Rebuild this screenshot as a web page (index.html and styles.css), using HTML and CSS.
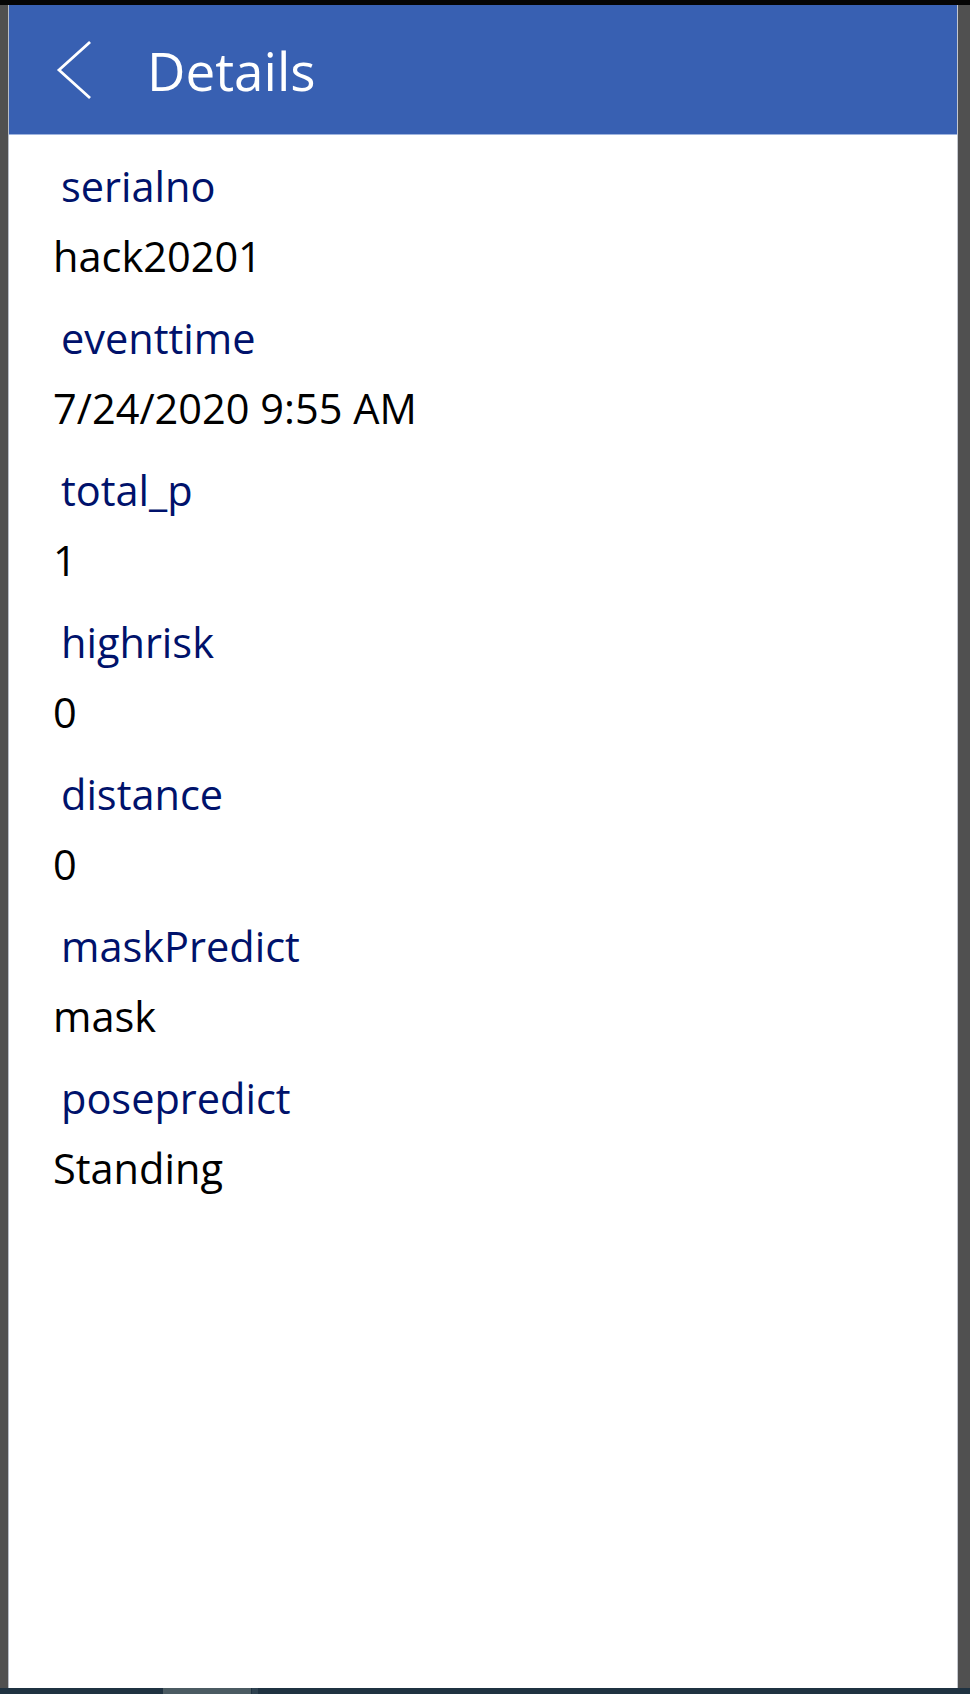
FILE: index.html
```html
<!DOCTYPE html>
<html lang="en">
<head>
<meta charset="utf-8">
<title>Details</title>
<link rel="stylesheet" href="styles.css">
</head>
<body>
<div class="topstrip"></div>
<div class="frame">
  <div class="side side-left"></div>
  <main class="app">
    <header class="header">
      <svg class="back" width="36" height="58" viewBox="0 0 36 58" aria-label="Back">
        <polyline points="33,2 3,29 33,56" fill="none" stroke="#ffffff" stroke-width="2.8" stroke-linecap="square" stroke-linejoin="miter"/>
      </svg>
      <h1 class="title">Details</h1>
    </header>
    <section class="fields">
      <div class="field"><div class="label">serialno</div><div class="value">hack20201</div></div>
      <div class="field"><div class="label">eventtime</div><div class="value">7/24/2020 9:55 AM</div></div>
      <div class="field"><div class="label">total_p</div><div class="value">1</div></div>
      <div class="field"><div class="label">highrisk</div><div class="value">0</div></div>
      <div class="field"><div class="label">distance</div><div class="value">0</div></div>
      <div class="field"><div class="label">maskPredict</div><div class="value">mask</div></div>
      <div class="field"><div class="label">posepredict</div><div class="value">Standing</div></div>
    </section>
  </main>
  <div class="side side-right"></div>
</div>
<div class="taskbar"><div class="task-item"></div><div class="task-mark"></div></div>
</body>
</html>
```
FILE: styles.css
```css
html, body {
  margin: 0;
  padding: 0;
}
body {
  width: 970px;
  height: 1694px;
  background: #505050;
  font-family: "Open Sans", "Noto Sans", sans-serif;
  overflow: hidden;
  display: flex;
  flex-direction: column;
}
.topstrip {
  height: 5px;
  background: #050505;
  flex: none;
}
.frame {
  flex: 1;
  display: flex;
  min-height: 0;
}
.side {
  background: #505050;
  flex: none;
}
.side-left {
  width: 8px;
}
.side-right {
  width: 12px;
}
.app {
  flex: 1;
  background: #ffffff;
  border-left: 1px solid #b9bec8;
  border-right: 1px solid #c4c8cf;
  display: flex;
  flex-direction: column;
}
.header {
  height: 130px;
  background: #3860b2;
  border-bottom: 1px solid #9fb4de;
  box-sizing: border-box;
  display: flex;
  align-items: center;
  flex: none;
}
.back {
  margin-left: 47px;
  flex: none;
}
.title {
  margin: 2px 0 0 55px;
  color: #ffffff;
  font-weight: 400;
  font-size: 53px;
  line-height: 60px;
}
.fields {
  padding: 21px 0 0 0;
}
.field {
  height: 152px;
  box-sizing: border-box;
}
.label {
  color: #00126b;
  font-size: 41.5px;
  line-height: 60px;
  padding-left: 52px;
}
.value {
  color: #000000;
  font-size: 41.5px;
  line-height: 60px;
  margin-top: 10px;
  padding-left: 44px;
}
.taskbar {
  height: 6px;
  background: #1f3241;
  flex: none;
  display: flex;
  padding-left: 163px;
}
.task-item {
  width: 88px;
  background: #4b5b62;
}
.task-mark {
  width: 6px;
  margin-left: 1px;
  background: #2e4250;
}
```
